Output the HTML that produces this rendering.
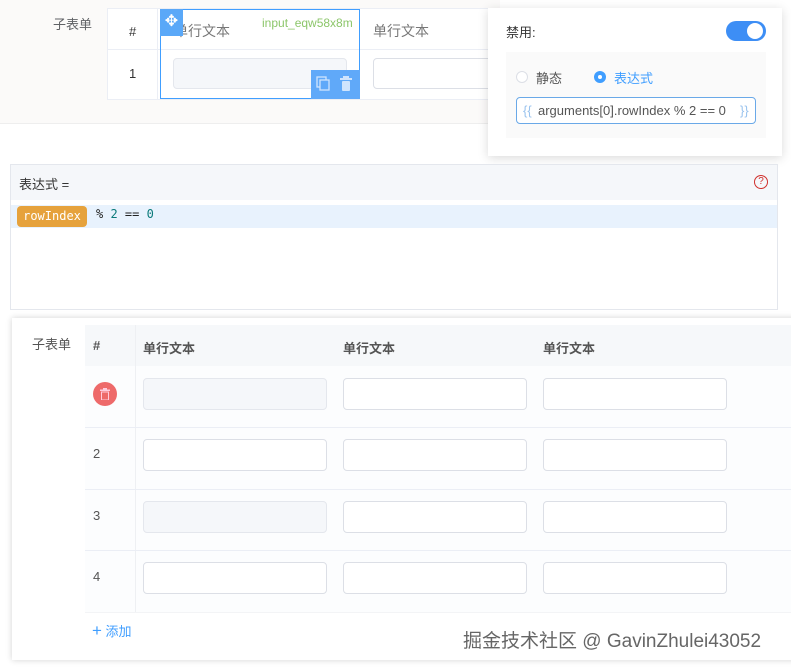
<!DOCTYPE html>
<html><head><meta charset="utf-8"><style>
*{box-sizing:border-box;margin:0;padding:0}
body{width:791px;height:669px;background:#fff;position:relative;overflow:hidden;font-family:"Liberation Sans","Noto Sans CJK SC",sans-serif;font-size:13px;color:#606266}
.a{position:absolute}
.inp{position:absolute;border:1px solid #dcdfe6;border-radius:4px;background:#fff;height:32px;width:184px}
.dis{background:#f5f7fa;border-color:#e4e7ed}
</style></head><body>
<!-- top panel -->
<div class="a" style="left:0;top:0;width:500px;height:124px;background:#fbfaf9;border-bottom:1px solid #eee"></div>
<div class="a" style="left:53px;top:14px;font-size:13px;color:#606266">子表单</div>
<div class="a" style="left:107px;top:8px;width:390px;height:92px;background:#fff;border:1px solid #ebeef5"></div>
<div class="a" style="left:107px;top:49px;width:390px;height:1px;background:#ebeef5"></div>
<div class="a" style="left:157px;top:8px;width:1px;height:92px;background:#ebeef5"></div>
<div class="a" style="left:129px;top:24px;color:#333">#</div>
<div class="a" style="left:129px;top:66px;color:#333">1</div>
<div class="a" style="left:173px;top:58px;width:174px;height:31px;background:#f5f7fa;border:1px solid #e4e7ed;border-radius:4px"></div>
<div class="a" style="left:174px;top:21px;font-size:14px;color:#777">单行文本</div>
<div class="a" style="left:160px;top:9px;width:200px;height:90px;border:1px solid #409eff"></div>
<div class="a" style="left:160px;top:9px;width:23px;height:27px;background:#5aa8f8;color:#fff;font-size:16px;text-align:center;line-height:25px">✥</div>
<div class="a" style="left:262px;top:16px;font-size:12px;color:#8cc66a">input_eqw58x8m</div>
<div class="a" style="left:311px;top:70px;width:49px;height:29px;background:#60a9f9"></div>
<svg class="a" style="left:316px;top:76px" width="14" height="16"><rect x="1" y="1" width="9" height="10" fill="none" stroke="#cfe4fd" stroke-width="1.3"/><rect x="4" y="4" width="9" height="10" fill="#60a9f9" stroke="#cfe4fd" stroke-width="1.3"/></svg>
<svg class="a" style="left:340px;top:76px" width="13" height="15"><rect x="3" y="0" width="6" height="2" fill="#cfe4fd"/><rect x="0" y="2" width="12" height="2" fill="#cfe4fd"/><rect x="2" y="5" width="8" height="10" rx="1" fill="#cfe4fd"/></svg>
<div class="a" style="left:373px;top:58px;width:130px;height:31px;border:1px solid #dcdfe6;border-radius:4px;background:#fff"></div>
<div class="a" style="left:373px;top:21px;font-size:14px;color:#777">单行文本</div>
<!-- popover -->
<div class="a" style="left:488px;top:8px;width:294px;height:148px;background:#fff;box-shadow:0 2px 10px rgba(0,0,0,.15)"></div>
<div class="a" style="left:506px;top:22px;font-size:13px;color:#333">禁用:</div>
<div class="a" style="left:726px;top:21px;width:40px;height:20px;border-radius:10px;background:#3d8ef5"></div>
<div class="a" style="left:747px;top:23px;width:16px;height:16px;border-radius:50%;background:#fff"></div>
<div class="a" style="left:506px;top:52px;width:260px;height:86px;background:#fafafa"></div>
<div class="a" style="left:516px;top:71px;width:12px;height:12px;border-radius:50%;border:1px solid #dcdfe6;background:#fff"></div>
<div class="a" style="left:536px;top:68px;color:#555">静态</div>
<div class="a" style="left:594px;top:71px;width:12px;height:12px;border-radius:50%;background:#409eff"></div>
<div class="a" style="left:598px;top:75px;width:4px;height:4px;border-radius:50%;background:#fff"></div>
<div class="a" style="left:614px;top:68px;color:#409eff">表达式</div>
<div class="a" style="left:516px;top:97px;width:240px;height:27px;border:1px solid #6aa9e8;border-radius:4px;background:#fff"></div>
<div class="a" style="left:523px;top:103px;font-size:13px;color:#9ac3ee">{{</div>
<div class="a" style="left:538px;top:103px;font-size:13px;color:#555">arguments[0].rowIndex % 2 == 0</div>
<div class="a" style="left:740px;top:103px;font-size:13px;color:#9ac3ee">}}</div>
<!-- expression -->
<div class="a" style="left:10px;top:164px;width:768px;height:146px;border:1px solid #e4e7ed;background:#fff"></div>
<div class="a" style="left:11px;top:165px;width:766px;height:35px;background:#f5f7fa"></div>
<div class="a" style="left:19px;top:174px;color:#333">表达式 =</div>
<div class="a" style="left:754px;top:175px;width:14px;height:14px;border-radius:50%;border:1.3px solid #d0302c;color:#d0302c;font-size:10px;text-align:center;line-height:12px">?</div>
<div class="a" style="left:11px;top:205px;width:766px;height:23px;background:#e8f2fd"></div>
<div class="a" style="left:17px;top:206px;width:70px;height:21px;background:#e6a23c;border-radius:4px;color:#fff;font-family:'DejaVu Sans Mono',monospace;font-size:12px;line-height:21px;text-align:center">rowIndex</div>
<div class="a" style="left:96px;top:207px;font-family:'DejaVu Sans Mono',monospace;font-size:12px;color:#222">% <span style="color:#0b7a7a">2</span> == <span style="color:#0b7a7a">0</span></div>
<!-- bottom panel -->
<div class="a" style="left:12px;top:318px;width:790px;height:342px;background:#fff;box-shadow:0 0 6px rgba(0,0,0,.18)"></div>
<div class="a" style="left:32px;top:334px;color:#555">子表单</div>
<div class="a" style="left:85px;top:325px;width:706px;height:41px;background:#f6f8fa"></div>
<div class="a" style="left:85px;top:366px;width:706px;height:246px;background:#fcfdfe"></div>
<div class="a" style="left:135px;top:325px;width:1px;height:287px;background:#eef0f3"></div>
<div class="a" style="left:85px;top:427px;width:706px;height:1px;background:#ebeef5"></div>
<div class="a" style="left:85px;top:489px;width:706px;height:1px;background:#ebeef5"></div>
<div class="a" style="left:85px;top:550px;width:706px;height:1px;background:#ebeef5"></div>
<div class="a" style="left:85px;top:612px;width:706px;height:1px;background:#f3f4f6"></div>
<div class="a" style="left:93px;top:338px;font-weight:bold;color:#555">#</div>
<div class="a" style="left:143px;top:338px;font-weight:bold;color:#555">单行文本</div>
<div class="a" style="left:343px;top:338px;font-weight:bold;color:#555">单行文本</div>
<div class="a" style="left:543px;top:338px;font-weight:bold;color:#555">单行文本</div>
<div class="a" style="left:93px;top:382px;width:24px;height:24px;border-radius:50%;background:#ee6a6a"></div>
<svg class="a" style="left:100px;top:388px" width="10" height="12"><rect x="3" y="0" width="4" height="1.5" fill="#fcd"/><rect x="0" y="1.5" width="10" height="1.5" fill="#fcd"/><rect x="1.5" y="4" width="7" height="8" fill="none" stroke="#fcd"/></svg>
<div class="a" style="left:93px;top:446px;color:#555">2</div>
<div class="a" style="left:93px;top:508px;color:#555">3</div>
<div class="a" style="left:93px;top:569px;color:#555">4</div>
<div class="inp dis" style="left:143px;top:378px"></div><div class="inp" style="left:343px;top:378px"></div><div class="inp" style="left:543px;top:378px"></div>
<div class="inp" style="left:143px;top:439px"></div><div class="inp" style="left:343px;top:439px"></div><div class="inp" style="left:543px;top:439px"></div>
<div class="inp dis" style="left:143px;top:501px"></div><div class="inp" style="left:343px;top:501px"></div><div class="inp" style="left:543px;top:501px"></div>
<div class="inp" style="left:143px;top:562px"></div><div class="inp" style="left:343px;top:562px"></div><div class="inp" style="left:543px;top:562px"></div>
<div class="a" style="left:92px;top:621px;color:#409eff;font-size:13px"><span style="font-size:17px">+</span> 添加</div>
<div class="a" style="left:463px;top:626px;font-size:19px;color:#666;text-shadow:0 0 2px #fff,0 0 2px #fff">掘金技术社区 @ GavinZhulei43052</div>
</body></html>
